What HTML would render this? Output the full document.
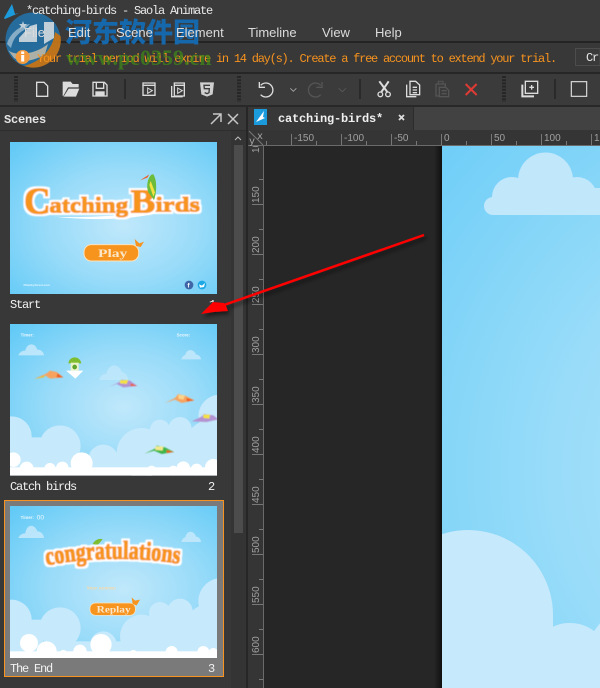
<!DOCTYPE html>
<html><head><meta charset="utf-8"><title>Saola Animate</title>
<style>
html,body{margin:0;padding:0;background:#383838;width:600px;height:688px;overflow:hidden}
svg{display:block;overflow:hidden}
.m{font-family:"Liberation Mono","Noto Sans CJK SC",monospace;font-size:12px;letter-spacing:-1.2px}
.b{font-family:"Liberation Mono","Noto Sans CJK SC",monospace;font-size:12px;letter-spacing:-.2px;font-weight:bold}
.s{font-family:"Liberation Sans",sans-serif}
.r{font-family:"Liberation Sans",sans-serif;font-size:10px;fill:#a0a0a0}
.i{fill:none;stroke:#dcdcdc;stroke-width:4}
.d{fill:none;stroke:#555;stroke-width:4}
.lc{fill:#c6e9fc}
.wc{fill:#fff}
.tt{font-family:"Liberation Serif",serif;font-weight:bold;fill:#f7941e}
</style></head>
<body>
<svg width="600" height="688" viewBox="0 0 600 688" xmlns="http://www.w3.org/2000/svg">
<defs>
<radialGradient id="sky" cx=".55" cy=".55" r=".75"><stop offset="0" stop-color="#c0e8fb"/><stop offset=".5" stop-color="#98dbf9"/><stop offset="1" stop-color="#62caf6"/></radialGradient>
<radialGradient id="big" gradientUnits="userSpaceOnUse" cx="800" cy="470" r="500"><stop offset="0" stop-color="#b4e4fb"/><stop offset=".5" stop-color="#98dcf9"/><stop offset="1" stop-color="#6ccdf7"/></radialGradient>
<linearGradient id="sh" x1="0" x2="1"><stop offset="0" stop-color="#262626"/><stop offset="1" stop-color="#101010"/></linearGradient>
<clipPath id="c1"><rect x="30" y="21" width="621" height="456"/></clipPath>
<clipPath id="c2"><rect x="30" y="18" width="621" height="455"/></clipPath>
<clipPath id="c3"><rect x="30" y="24" width="621" height="456"/></clipPath>
<clipPath id="rv"><rect x="248" y="146" width="16" height="542"/></clipPath>
<clipPath id="cl"><rect x="442" y="146" width="158" height="69"/></clipPath>
<path id="arc" d="M140 202Q340 165 545 198"/>
<filter id="b"><feGaussianBlur stdDeviation="1.4"/></filter>
<filter id="fat" x="-5%" y="-20%" width="110%" height="140%" primitiveUnits="userSpaceOnUse">
<feMorphology in="SourceGraphic" operator="dilate" radius="2" result="f"/>
<feMorphology in="SourceAlpha" operator="dilate" radius="7" result="o"/>
<feFlood flood-color="#fff"/><feComposite in2="o" operator="in" result="w"/>
<feMerge result="mg"><feMergeNode in="w"/><feMergeNode in="f"/></feMerge>
<feGaussianBlur in="mg" stdDeviation="1.200"/>
</filter>
<filter id="ash" x="-10%" y="-30%" width="120%" height="160%"><feDropShadow dx="2" dy="3" stdDeviation="2" flood-color="#000" flood-opacity=".55"/></filter>
</defs>

<rect width="600" height="688" fill="#383838"/>
<!-- title/menu -->
<rect width="600" height="41" fill="#3a3a3a"/>
<rect y="41" width="600" height="2" fill="#242424"/>
<rect y="43" width="600" height="29" fill="#383838"/>
<rect y="72" width="600" height="2" fill="#262626"/>
<rect y="74" width="600" height="31" fill="#3b3b3b"/>
<rect y="105" width="600" height="2" fill="#282828"/>

<!-- watermark -->
<g opacity=".9">
<circle cx="33" cy="40" r="27.500" fill="#2372a8"/>
<path d="M60.500 36A27.500 27.500 0 0 1 24 66C40 62 53 50 55 32Z" fill="#cc7a18"/>
<path d="M8 50C16 57 36 54 48 44L45 54C35 61 22 63 14 58Z" fill="#b9bdb4"/>
<path d="M7 44C10 32 22 25 30 24L24 30C17 34 13 39 11 48Z" fill="#8fb9d6"/>
<path d="M19 38L30 26L37 24V42H19Z" fill="#cfe0ea"/>
<path d="M44 22H54V38L44 44Z" fill="#cfe0ea"/>
<path d="M23 21L24 24L27 24L25 26L25 29L23 27L20 29L21 26L19 24L22 24Z" fill="#cfe0ea"/>
</g>
<text x="65" y="42" font-family="'Noto Sans CJK SC',sans-serif" font-weight="900" font-size="27" fill="#1668ad">河东软件园</text>

<path d="M4 18L12 4L15 14L19 13L5 19Z" fill="#1c9bdc"/>
<text x="26" y="14" class="m" fill="#e8e8e8">*catching-birds - Saola Animate</text>
<g class="s" font-size="13" fill="#dcdcdc">
<text x="24" y="37">File</text><text x="68" y="37">Edit</text><text x="116" y="37">Scene</text><text x="176" y="37">Element</text><text x="248" y="37">Timeline</text><text x="322" y="37">View</text><text x="375" y="37">Help</text>
</g>
<text x="37" y="62" class="m" fill="#f7931e" textLength="519">Your trial period will expire in 14 day(s). Create a free account to extend your trial.</text>
<text x="66" y="65" font-family="'Liberation Serif',serif" font-weight="bold" font-size="22" fill="#3f8b17" opacity=".72">www.pc0359.cn</text>
<rect x="575.500" y="48.500" width="24.500" height="17" fill="#3a3a3a" stroke="#4c4c4c"/>
<text x="586" y="61" class="m" fill="#e8e8e8">Cr</text>
<circle cx="22.700" cy="57" r="7" fill="#f39a3c"/><rect x="21.200" y="55" width="3" height="6.500" fill="#fff"/><rect x="21.200" y="51.500" width="3" height="2.500" fill="#fff"/>

<!-- toolbar -->
<g stroke="#262626" stroke-width="4" stroke-dasharray="2 1.200" fill="none">
<path d="M16 76V102M239 76V102M504 76V102"/>
</g>
<g fill="#2a2a2a"><rect x="124" y="79" width="2" height="20"/><rect x="359" y="79" width="2" height="20"/><rect x="554" y="79" width="2" height="20"/></g>
<g transform="scale(.33333)">
<path class="i" d="M110 247H132L143 258V289H110Z"/>
<path d="M188 288V245H212L218 252H236V262H204L190 288ZM192 288L206 266H238L228 290H190Z" fill="#dcdcdc"/>
<path class="i" d="M279 247H313L321 255V288H279Z"/><path class="i" d="M289 248V265H311V248"/><rect x="286" y="274" width="28" height="14" fill="#dcdcdc"/>
<path class="i" d="M429 249H465V286H429ZM429 256H465"/><path d="M443 264L457 272L443 280Z" fill="none" stroke="#dcdcdc" stroke-width="3"/>
<path class="i" d="M523 249H553V288H523ZM523 256H553M515 258V290H548" stroke-width="3"/><path d="M533 264L547 272L533 280Z" fill="none" stroke="#dcdcdc" stroke-width="3"/>
<path d="M600 247H642L638 283L621 290L604 283Z" fill="#cfcfcf"/><path d="M630 256H612L613 266H628L627 278L621 281L614 278" fill="none" stroke="#3b3b3b" stroke-width="4"/>
<path class="i" d="M782 256A21 21 0 1 1 782 284M778 246V262H795"/>
<path d="M871 265L880 274L889 265" fill="none" stroke="#aaa" stroke-width="2.500"/>
</g>
<g transform="translate(300,0) scale(.33333)">
<path class="d" d="M62 256A21 21 0 1 0 62 284M66 246V262H49"/>
<path d="M116 265L127 275L138 265" fill="none" stroke="#5a5a5a" stroke-width="2.500"/>
<path d="M238 244L262 276M266 244L244 276" fill="none" stroke="#dcdcdc" stroke-width="6"/><circle cx="241" cy="283" r="7" class="i"/><circle cx="264" cy="283" r="7" class="i"/>
<path class="i" d="M330 244H347L359 255V284H330ZM320 254V290H349M338 262H351M338 270H351M338 278H351" stroke-width="3.500"/>
<path class="d" d="M408 252H436V262M408 252V288H418M418 262H437L446 271V290H418ZM425 272H440M425 281H440" stroke-width="3.500"/><rect x="415" y="244" width="14" height="8" fill="none" stroke="#555" stroke-width="3"/>
<path d="M497 252L530 285M530 252L497 285" stroke="#e03a34" stroke-width="6" fill="none"/>
<path class="i" d="M676 244H713V280H676ZM688 262H702M695 255V269" stroke-width="3.500"/><path d="M667 254V289H702" fill="none" stroke="#dcdcdc" stroke-width="6"/>
<rect x="814" y="245" width="46" height="44" fill="none" stroke="#dcdcdc" stroke-width="3.500"/>
</g>

<!-- left panel -->
<rect x="0" y="107" width="247" height="581" fill="#383838"/>
<text x="4" y="123" class="b" fill="#e6e6e6">Scenes</text>
<path d="M211 124L221 114M213 114H221V122" fill="none" stroke="#c8c8c8" stroke-width="1.500"/>
<path d="M228 114L238 124M238 114L228 124" fill="none" stroke="#c8c8c8" stroke-width="1.500"/>
<rect x="0" y="130" width="247" height="1" fill="#2e2e2e"/>
<rect x="231" y="131" width="15" height="557" fill="#343434"/>
<rect x="234" y="145" width="9" height="388" fill="#4c4c4c"/>
<path d="M235 140L238 137L241 140" fill="none" stroke="#bbb"/>
<rect x="246" y="107" width="2" height="581" fill="#262626"/>

<!-- selected -->
<rect x="4.500" y="500.500" width="219" height="176" fill="#7a7a7a" stroke="#f7931e"/>

<!-- thumb 1 -->
<g transform="translate(0,135) scale(.33333)">
<g clip-path="url(#c1)">
<rect x="30" y="21" width="621" height="456" fill="url(#sky)"/>
<path d="M160 245C260 250 400 240 500 225C420 255 280 258 160 245Z" fill="#fff"/>
<g class="tt" filter="url(#fat)">
<text x="72" y="236" font-size="112" textLength="80" lengthAdjust="spacingAndGlyphs">C</text>
<text x="148" y="232" font-size="66" textLength="236" lengthAdjust="spacingAndGlyphs">atching</text>
<text x="392" y="232" font-size="102" textLength="74" lengthAdjust="spacingAndGlyphs">B</text>
<text x="466" y="230" font-size="64" textLength="134" lengthAdjust="spacingAndGlyphs">irds</text>
</g>
<path d="M445 172C435 145 450 115 460 118C472 135 470 175 462 195Z" fill="#6dbb3a"/><path d="M448 118L420 136L442 128Z" fill="#ef5d23"/><path d="M452 138L465 172L460 185L448 150Z" fill="#f4e23f"/>
<rect x="252" y="329" width="164" height="49" rx="22" fill="#f7941e" stroke="#fde3bb" stroke-width="3"/>
<text x="294" y="366" font-family="'Liberation Serif',serif" font-weight="bold" font-size="36" fill="#fbe6c8" textLength="88" lengthAdjust="spacingAndGlyphs">Play</text>
<path d="M404 312L418 325L432 320L422 336L408 333Z" fill="#f7941e"/>
<text x="70" y="453" class="s" font-size="9" font-weight="bold" fill="#e6f6ff">#thankyforest.com</text>
<circle cx="567" cy="450" r="13" fill="#3f67a8"/><circle cx="606" cy="450" r="13" fill="#1da9e6"/>
<text x="562" y="458" class="s" font-size="20" font-weight="bold" fill="#fff">f</text><path d="M597 448L606 452L615 444L612 456L600 458Z" fill="#fff"/>
</g>
</g>

<!-- thumb 2 -->
<g transform="translate(0,318) scale(.33333)">
<g clip-path="url(#c2)">
<rect x="30" y="18" width="621" height="455" fill="url(#sky)"/>
<g class="lc">
<circle cx="35" cy="355" r="60"/><circle cx="180" cy="384" r="62"/><circle cx="425" cy="405" r="75"/><circle cx="480" cy="335" r="30"/><circle cx="540" cy="332" r="35"/><circle cx="310" cy="425" r="45"/><circle cx="660" cy="295" r="65"/><circle cx="620" cy="370" r="60"/>
<rect x="30" y="358" width="100" height="115"/><rect x="440" y="345" width="211" height="128"/><rect x="30" y="420" width="621" height="53"/>
</g>
<g class="wc">
<circle cx="40" cy="425" r="22"/><circle cx="80" cy="452" r="21"/><circle cx="150" cy="452" r="17"/><circle cx="187" cy="450" r="19"/><circle cx="245" cy="436" r="33"/><circle cx="340" cy="462" r="11"/><circle cx="455" cy="458" r="15"/><circle cx="520" cy="458" r="15"/><circle cx="550" cy="450" r="20"/><circle cx="590" cy="455" r="18"/><circle cx="640" cy="448" r="25"/>
<rect x="30" y="448" width="621" height="25"/>
</g>
<path d="M55 112C60 100 70 98 76 98C80 75 105 72 112 95C125 95 132 105 132 112Z" fill="#c6e9fc" opacity=".85"/>
<path d="M544 124C548 112 555 112 556 110C560 92 582 92 588 110C597 110 603 118 603 124Z" fill="#c6e9fc" opacity=".85"/>
<path d="M298 186C300 170 315 168 320 166C325 135 358 135 365 162C378 164 385 178 385 186Z" fill="#c6e9fc" opacity=".65"/>
<text x="62" y="56" class="s" font-size="13" font-weight="bold" fill="#eaf8ff">Timer:</text>
<text x="530" y="56" class="s" font-size="13" font-weight="bold" fill="#eaf8ff">Score:</text>
<path d="M205 136C208 112 240 112 244 136Z" fill="#7ebd2f"/><rect x="212" y="134" width="24" height="24" fill="#e9f2c9"/><circle cx="224" cy="147" r="7" fill="#5fa52d"/><path d="M198 158H250L226 182Z" fill="#fff"/>
<g filter="url(#b)">
<path d="M102 183L140 166L150 158L170 162L190 178L150 182L135 172Z" fill="#f7a35f"/><path d="M102 183L135 172L132 178Z" fill="#e7c12f"/><path d="M172 166L190 178L170 178Z" fill="#ef5d23"/>
<path d="M325 207L355 194L365 185L390 188L412 204L370 208L350 198Z" fill="#b393d0"/><path d="M360 187L385 186L380 198L360 196Z" fill="#f4e23f"/><path d="M392 196L412 204L392 204Z" fill="#ef5d23"/>
<path d="M495 255L525 240L535 228L558 234L583 247L545 255L525 245Z" fill="#f7a35f"/><path d="M535 230L555 232L550 245L535 242Z" fill="#fbd48b"/><path d="M560 240L583 247L560 250Z" fill="#ef5d23"/>
<path d="M575 310L605 296L612 288L640 292L655 304L620 312Z" fill="#b393d0"/><path d="M610 290L630 290L628 302L610 300Z" fill="#f4e23f"/>
<path d="M434 407L465 392L470 383L495 388L522 402L485 408L462 398Z" fill="#3eb54a"/><path d="M466 385L490 385L488 398L466 396Z" fill="#f3e98f"/><path d="M500 396L522 402L500 405Z" fill="#ef5d23"/>
</g>
</g>
</g>

<!-- thumb 3 -->
<g transform="translate(0,498) scale(.33333)">
<g clip-path="url(#c3)">
<rect x="30" y="24" width="621" height="456" fill="url(#sky)"/>
<g class="lc">
<circle cx="35" cy="365" r="60"/><circle cx="180" cy="390" r="62"/><circle cx="425" cy="415" r="65"/><circle cx="480" cy="345" r="33"/><circle cx="540" cy="340" r="38"/><circle cx="310" cy="440" r="40"/><circle cx="665" cy="310" r="70"/><circle cx="620" cy="380" r="60"/>
<rect x="30" y="365" width="100" height="115"/><rect x="440" y="355" width="211" height="125"/><rect x="30" y="430" width="621" height="50"/>
</g>
<g class="wc">
<circle cx="87" cy="435" r="27"/><circle cx="140" cy="460" r="30"/><circle cx="190" cy="468" r="12"/><circle cx="240" cy="460" r="20"/><circle cx="303" cy="440" r="32"/><circle cx="400" cy="468" r="12"/><circle cx="460" cy="470" r="10"/><circle cx="515" cy="462" r="18"/><circle cx="570" cy="470" r="10"/><circle cx="610" cy="462" r="18"/><circle cx="640" cy="465" r="15"/>
<rect x="30" y="460" width="621" height="20"/>
</g>
<path d="M55 120C60 108 70 106 76 106C80 75 105 78 112 100C125 100 132 112 132 120Z" fill="#c6e9fc" opacity=".85"/>
<path d="M544 132C548 118 555 118 556 118C560 96 582 96 588 116C597 116 603 125 603 132Z" fill="#c6e9fc" opacity=".85"/>
<text x="62" y="63" class="s" font-size="13" font-weight="bold" fill="#eaf8ff">Timer:</text>
<text x="110" y="65" class="s" font-size="20" fill="#eaf8ff">00</text>
<path d="M278 138C285 124 300 120 308 124L292 142Z" fill="#7ebd2f"/>
<text class="tt" font-size="78" filter="url(#fat)"><textPath href="#arc" textLength="400" lengthAdjust="spacingAndGlyphs">congratulations</textPath></text>
<text x="259" y="274" class="s" font-size="15" font-weight="bold" fill="#fbd9a4">Your scores:</text>
<rect x="270" y="315" width="136" height="37" rx="16" fill="#f7941e" stroke="#fde3bb" stroke-width="2"/>
<text x="290" y="344" font-family="'Liberation Serif',serif" font-weight="bold" font-size="28" fill="#fbe6c8" textLength="102" lengthAdjust="spacingAndGlyphs">Replay</text>
<path d="M395 298L405 308L420 305L410 322L398 318Z" fill="#f7941e"/>
</g>
</g>

<g fill="#f2f2f2" class="m">
<text x="10" y="308">Start</text><text x="209" y="308">1</text>
<text x="10" y="490">Catch birds</text><text x="208" y="490">2</text>
<text x="10" y="672">The End</text><text x="208" y="672">3</text>
</g>

<!-- tabs -->
<rect x="248" y="107" width="352" height="23" fill="#424242"/>
<rect x="248" y="107" width="165" height="23" fill="#383838"/>
<rect x="413" y="107" width="1" height="23" fill="#2c2c2c"/>
<rect x="254" y="109" width="13" height="16" fill="#1c9bdc"/><path d="M256 122L264 111L263 117L265 118Z" fill="#fff"/>
<text x="278" y="122" class="b" fill="#f0f0f0">catching-birds*</text>
<path d="M399 115L404 120M404 115L399 120" stroke="#ddd" stroke-width="1.800"/>

<!-- rulers -->
<rect x="248" y="130" width="352" height="16" fill="#353535"/>
<rect x="248" y="146" width="16" height="542" fill="#353535"/>
<rect x="264" y="146" width="178" height="542" fill="#262626"/>
<rect x="434" y="146" width="8" height="542" fill="url(#sh)"/>
<rect x="248" y="145" width="352" height="1" fill="#6a6a6a"/>
<rect x="263" y="146" width="1" height="542" fill="#6a6a6a"/>
<path d="M249 131L263 145" stroke="#777"/>
<text x="257" y="139" class="m" style="font-size:10px;letter-spacing:0" fill="#aaa">x</text><text x="249" y="144" class="m" style="font-size:10px;letter-spacing:0" fill="#aaa">y</text>
<g stroke="#777" fill="none">
<path d="M266.500 141V145M291.500 134V145M316.500 141V145M341.500 134V145M366.500 141V145M391.500 134V145M416.500 141V145M441.500 134V145M466.500 141V145M491.500 134V145M516.500 141V145M541.500 134V145M566.500 141V145M591.500 134V145"/>
<path d="M259 179.500H263M252 204.500H263M259 229.500H263M252 254.500H263M259 279.500H263M252 304.500H263M259 329.500H263M252 354.500H263M259 379.500H263M252 404.500H263M259 429.500H263M252 454.500H263M259 479.500H263M252 504.500H263M259 529.500H263M252 554.500H263M259 579.500H263M252 604.500H263M259 629.500H263M252 654.500H263M259 679.500H263"/>
</g>
<g class="r">
<text x="294" y="141">-150</text><text x="344" y="141">-100</text><text x="394" y="141">-50</text><text x="444" y="141">0</text><text x="494" y="141">50</text><text x="544" y="141">100</text><text x="594" y="141" textLength="6" lengthAdjust="spacing">1</text>
</g>
<g class="r" clip-path="url(#rv)">
<text transform="translate(259,153) rotate(-90)">10</text>
<text transform="translate(259,203) rotate(-90)">150</text>
<text transform="translate(259,253) rotate(-90)">200</text>
<text transform="translate(259,303) rotate(-90)">250</text>
<text transform="translate(259,353) rotate(-90)">300</text>
<text transform="translate(259,403) rotate(-90)">350</text>
<text transform="translate(259,453) rotate(-90)">400</text>
<text transform="translate(259,503) rotate(-90)">450</text>
<text transform="translate(259,553) rotate(-90)">500</text>
<text transform="translate(259,603) rotate(-90)">550</text>
<text transform="translate(259,653) rotate(-90)">600</text>
</g>

<!-- artboard -->
<rect x="442" y="146" width="158" height="542" fill="url(#big)"/>
<g fill="#c1e7fb" clip-path="url(#cl)">
<circle cx="545.500" cy="180" r="27.500"/><circle cx="512" cy="197" r="20"/><circle cx="493" cy="206" r="9"/><circle cx="577" cy="197" r="20"/><rect x="493" y="197" width="107" height="18"/><rect x="590" y="188" width="10" height="27"/>
</g>
<g fill="#c6e9fc">
<path d="M442 534.100A85 85 0 0 1 553 615V688H442Z"/>
<path d="M530 688V663A40 40 0 0 1 600 636.500V688Z"/>
<path d="M579.200 688A93 93 0 0 1 600 623.100V688Z"/>
</g>

<!-- arrow -->
<g filter="url(#ash)">
<path d="M424 235L224 305" stroke="#f00" stroke-width="2.500" fill="none"/>
<path d="M201 314L213 302L224 303L226 306L228 311L214 312Z" fill="#f00"/>
</g>
</svg>
</body></html>
